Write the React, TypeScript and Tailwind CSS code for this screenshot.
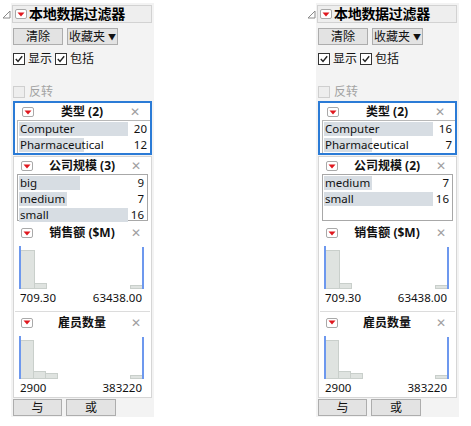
import React from "react";

type Item = { label: string; count: number };

type PanelProps = {
  types: Item[];
  typeMax: number;
  sizes: Item[];
  sizeMax: number;
  sizeTitle: string;
};

const font = {
  fontFamily: '"Noto Sans", "Noto Sans CJK SC", sans-serif',
};

const RedMenu: React.FC = () => (
  <span className="w-[12px] h-[10px] border border-[#a9a9a9] rounded-[2px] bg-white flex items-center justify-center shrink-0">
    <svg width="8" height="5" viewBox="0 0 8 5">
      <polygon points="0.5,0.5 7.5,0.5 4,4.5" fill="#e0181f" />
    </svg>
  </span>
);

const Check: React.FC<{ disabled?: boolean }> = ({ disabled }) => (
  <span
    className={`w-[12px] h-[12px] border flex items-center justify-center shrink-0 ${
      disabled ? "border-[#cfcfcf] bg-[#eeeeee]" : "border-[#333333] bg-white"
    }`}
  >
    {!disabled && (
      <svg width="10" height="10" viewBox="0 0 10 10">
        <polyline points="1.8,5 4,7.4 8.2,2.2" fill="none" stroke="#222" strokeWidth="1.4" />
      </svg>
    )}
  </span>
);

const Btn: React.FC<{ w: string; children: React.ReactNode }> = ({ w, children }) => (
  <div
    className={`${w} h-[17px] bg-[#e3e3e3] border border-[#adadad] flex items-center justify-center text-[12px] text-[#111]`}
  >
    {children}
  </div>
);

const SectionHeader: React.FC<{ title: string }> = ({ title }) => (
  <div className="h-[16px] flex items-center pl-[7px] pr-[10px]">
    <RedMenu />
    <div className="flex-1 text-center text-[12px] font-bold text-[#111] leading-none">{title}</div>
    <span className="text-[12px] text-[#a0a0a0] leading-none">✕</span>
  </div>
);

const ListRow: React.FC<{ item: Item; max: number; barMax: number }> = ({ item, max, barMax }) => (
  <div className="h-[16px] flex items-center pl-[1px] pr-[3px] relative">
    <div
      className="absolute left-[1px] top-[1px] h-[14px] bg-[#d7dde3]"
      style={{ width: Math.round((item.count / max) * barMax) }}
    />
    <span className="relative flex-1 text-[11.5px] text-[#111] leading-none pl-[1px]">{item.label}</span>
    <span className="relative text-[11.5px] text-[#111] leading-none">{item.count}</span>
  </div>
);

const Histogram: React.FC<{ bars: { x: number; w: number; h: number }[]; lo: string; hi: string }> = ({
  bars,
  lo,
  hi,
}) => (
  <div className="mt-[5px] ml-[5px] w-[125px]">
    <svg width="125" height="43" viewBox="0 0 125 43">
      {bars.map((b, i) => (
        <rect
          key={i}
          x={b.x + 0.5}
          y={43 - b.h + 0.5}
          width={b.w}
          height={b.h - 1}
          fill="#dfe3e0"
          stroke="#c9cfcb"
          strokeWidth="1"
        />
      ))}
      <rect x="0" y="0" width="2" height="43" fill="#6d98ee" />
      <rect x="123" y="1" width="2" height="42" fill="#6d98ee" />
    </svg>
    <div className="flex justify-between text-[11.5px] text-[#111] leading-none mt-[3px] pl-[1px] pr-[2px]">
      <span>{lo}</span>
      <span>{hi}</span>
    </div>
  </div>
);

const FilterPanel: React.FC<PanelProps> = ({ types, typeMax, sizes, sizeMax, sizeTitle }) => (
  <div className="flex pt-[3px]">
    <div className="w-[8px] pt-[7px]">
      <svg width="8" height="9" viewBox="0 0 8 9">
        <polygon points="7,1 7,8 0,8" fill="none" stroke="#8a8a8a" strokeWidth="1" />
      </svg>
    </div>
    <div className="w-[143px] h-[414px] bg-[#f3f3f3] pl-[1px] pt-[2px] flex flex-col">
      {/* title bar */}
      <div className="w-[140px] h-[18px] bg-[#eeeeee] border border-[#d2d2d2] flex items-center gap-[2px] pl-[2px]">
        <RedMenu />
        <span className="text-[14px] font-bold text-black leading-none tracking-[-0.3px]">本地数据过滤器</span>
      </div>

      {/* clear / favorites */}
      <div className="flex gap-[4px] mt-[5px] ml-[1px]">
        <Btn w="w-[50px]">清除</Btn>
        <Btn w="w-[51px]">
          收藏夹 <span className="text-[8px] ml-[3px]">▼</span>
        </Btn>
      </div>

      {/* show / include */}
      <div className="flex items-center mt-[7px] ml-[1px] h-[13px] text-[12px] text-[#111]">
        <Check />
        <span className="ml-[3px]">显示</span>
        <span className="ml-[3px]">
          <Check />
        </span>
        <span className="ml-[3px]">包括</span>
      </div>

      {/* invert */}
      <div className="flex items-center mt-[20px] ml-[1px] h-[13px] text-[12px] text-[#a3a3a3]">
        <Check disabled />
        <span className="ml-[4px]">反转</span>
      </div>

      {/* type filter (selected) */}
      <div className="mt-[3px] ml-[1px] w-[139px] border-2 border-[#2b7bd6] bg-white">
        <div className="pt-[1px]">
          <SectionHeader title={`类型 (${types.length})`} />
        </div>
        <div className="ml-[2px] border-t border-l border-[#b8b8b8]">
          {types.map((t) => (
            <ListRow key={t.label} item={t} max={typeMax} barMax={109} />
          ))}
        </div>
      </div>

      {/* remaining filters */}
      <div className="mt-[1px] ml-[1px] w-[139px] h-[242px] border border-[#d6d6d6] bg-white">
        <div className="pt-[1px]">
          <SectionHeader title={sizeTitle} />
        </div>
        <div className="ml-[3px] w-[131px] h-[47px] border border-[#a8a8a8]">
          {sizes.map((s) => (
            <ListRow key={s.label} item={s} max={sizeMax} barMax={109} />
          ))}
        </div>

        <div className="mt-[4px]">
          <SectionHeader title="销售额 ($M)" />
        </div>
        <Histogram
          bars={[
            { x: 1, w: 14, h: 39 },
            { x: 15, w: 12, h: 6 },
            { x: 111, w: 12, h: 4 },
          ]}
          lo="709.30"
          hi="63438.00"
        />
        <div className="mx-[1px] mt-[7px] border-t border-[#dcdcdc]" />

        <div className="mt-[3px]">
          <SectionHeader title="雇员数量" />
        </div>
        <Histogram
          bars={[
            { x: 1, w: 13, h: 39 },
            { x: 14, w: 12, h: 8 },
            { x: 26, w: 12, h: 6 },
            { x: 111, w: 12, h: 4 },
          ]}
          lo="2900"
          hi="383220"
        />
      </div>

      {/* and / or */}
      <div className="flex gap-[4px] mt-[1px] ml-[1px]">
        <Btn w="w-[49px]">与</Btn>
        <Btn w="w-[50px]">或</Btn>
      </div>
    </div>
  </div>
);

export default function App() {
  return (
    <div className="w-[471px] h-[426px] bg-white flex pl-[3px]" style={font}>
      <FilterPanel
        types={[
          { label: "Computer", count: 20 },
          { label: "Pharmaceutical", count: 12 },
        ]}
        typeMax={20}
        sizes={[
          { label: "big", count: 9 },
          { label: "medium", count: 7 },
          { label: "small", count: 16 },
        ]}
        sizeMax={16}
        sizeTitle="公司规模 (3)"
      />
      <div className="w-[154px]" />
      <FilterPanel
        types={[
          { label: "Computer", count: 16 },
          { label: "Pharmaceutical", count: 7 },
        ]}
        typeMax={16}
        sizes={[
          { label: "medium", count: 7 },
          { label: "small", count: 16 },
        ]}
        sizeMax={16}
        sizeTitle="公司规模 (2)"
      />
    </div>
  );
}
